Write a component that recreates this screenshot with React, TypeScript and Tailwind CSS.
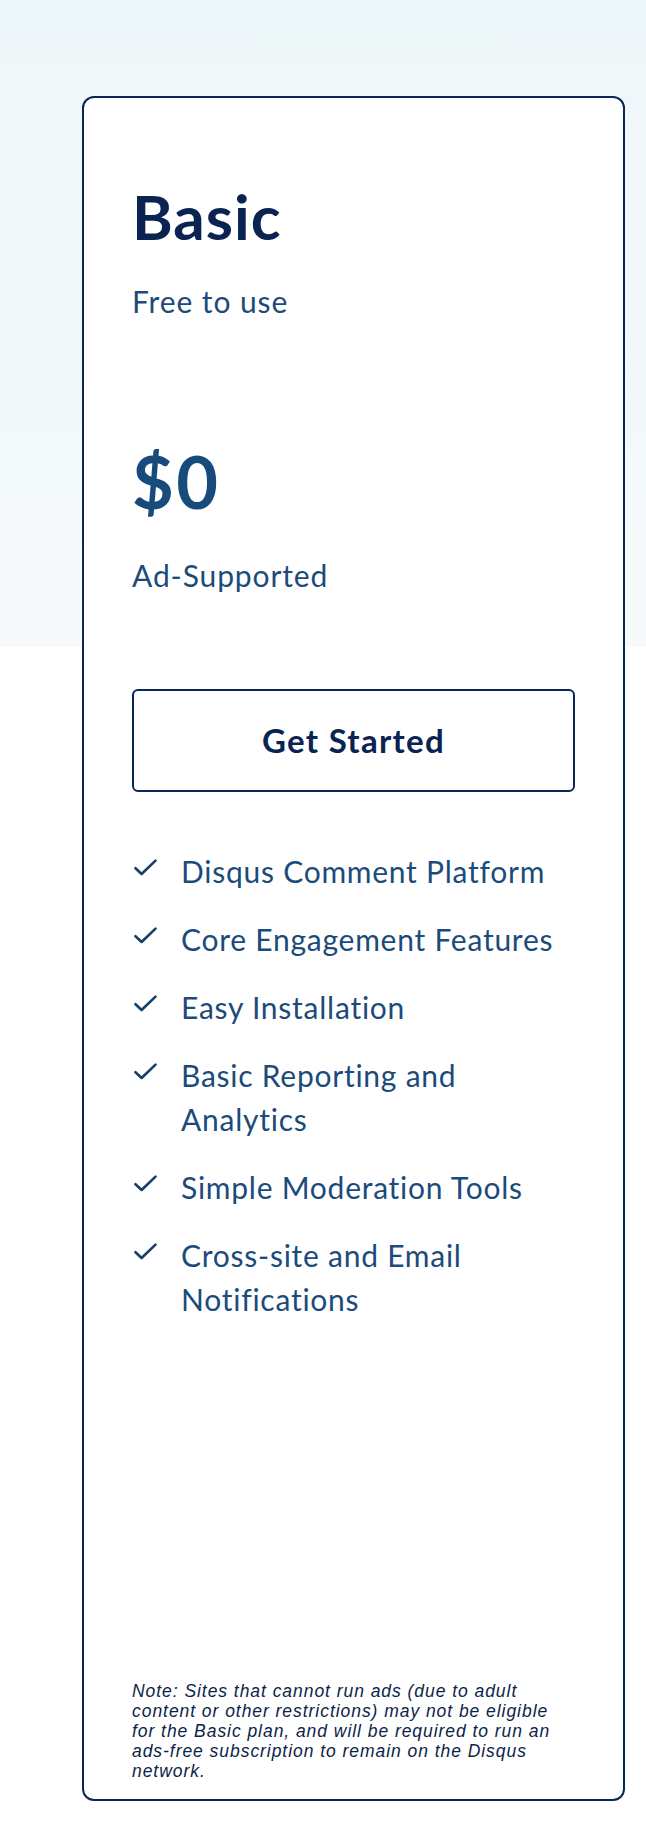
import React from "react";

const features: string[][] = [
  ["Disqus Comment Platform"],
  ["Core Engagement Features"],
  ["Easy Installation"],
  ["Basic Reporting and", "Analytics"],
  ["Simple Moderation Tools"],
  ["Cross-site and Email", "Notifications"],
];

function Check() {
  return (
    <svg width="23" height="17" viewBox="0 0 23 17" fill="none" className="ml-[2px] mt-[10px] shrink-0">
      <path d="M1.5 9.2 L7.6 15 L21.5 1.6" stroke="#163f6c" strokeWidth="2.6" strokeLinecap="round" strokeLinejoin="round" />
    </svg>
  );
}

export default function App() {
  return (
    <div
      className="relative w-[646px] min-h-[1844px] bg-white"
      style={{ fontFamily: "Lato, 'Open Sans', sans-serif" }}
    >
      <div className="absolute left-0 top-0 h-[647px] w-full bg-[linear-gradient(180deg,#eef7f9_0%,#f1f8fa_50%,#f7fafb_100%)]" />
      <div className="relative pt-[96px] pl-[82px]">
        <div className="flex h-[1705px] w-[543px] flex-col rounded-[12px] border-2 border-[#0a2656] bg-white px-[48px] pt-[82px]">
          <h2 className="text-[62px] font-bold leading-[72px] tracking-[1px] text-[#0a2351]">Basic</h2>
          <p className="mt-[31px] text-[30px] leading-[36px] tracking-[0.9px] text-[#1b4b7b]">Free to use</p>
          <p className="mt-[120px] text-[72px] font-bold leading-[84px] tracking-[2.5px] text-[#174b7c]">$0</p>
          <p className="mt-[34px] text-[30px] leading-[36px] tracking-[0.9px] text-[#1b4b7b]">Ad-Supported</p>
          <button className="mt-[96px] flex h-[103px] w-full items-center justify-center rounded-[6px] border-2 border-[#0a2656] bg-white text-[33px] font-bold tracking-[1.3px] text-[#0a2351]">
            Get Started
          </button>
          <ul className="mt-[57px] flex flex-col gap-[24px]">
            {features.map((lines, i) => (
              <li key={i} className="flex">
                <div className="flex w-[49px] shrink-0">
                  <Check />
                </div>
                <span className="text-[30px] leading-[44px] tracking-[0.75px] text-[#1b4b7b]">
                  {lines.map((l, j) => (
                    <React.Fragment key={j}>
                      {j > 0 && <br />}
                      {l}
                    </React.Fragment>
                  ))}
                </span>
              </li>
            ))}
          </ul>
          <p
            className="mt-auto mb-[18px] whitespace-nowrap text-[17.5px] italic leading-[20px] tracking-[0.95px] text-[#0c2448]"
            style={{ fontFamily: "'Liberation Sans', Arial, sans-serif" }}
          >
            Note: Sites that cannot run ads (due to adult
            <br />
            content or other restrictions) may not be eligible
            <br />
            for the Basic plan, and will be required to run an
            <br />
            ads-free subscription to remain on the Disqus
            <br />
            network.
          </p>
        </div>
      </div>
    </div>
  );
}
